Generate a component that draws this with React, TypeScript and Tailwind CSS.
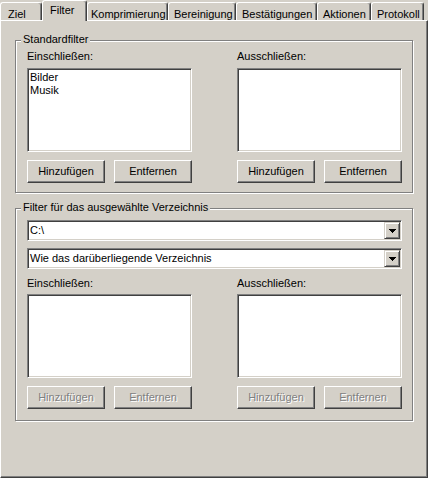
import type { ReactNode } from "react"
import clsx from "clsx"

// ─── Data ─────────────────────────────────────────────────────────────────────

const TABS = [
  { label: "Ziel", width: "w-[42px] pl-[7px]" },
  { label: "Filter", width: "w-[45px] pl-[7px]", active: true },
  { label: "Komprimierung", width: "w-[81px] pl-[3px]" },
  { label: "Bereinigung", width: "w-[68px] pl-[5px]" },
  { label: "Bestätigungen", width: "w-[81px] pl-[5px]" },
  { label: "Aktionen", width: "w-[54px] pl-[5px]" },
  { label: "Protokoll", width: "w-[53px] pl-[5px]" },
]

// classic 3D edges
const RAISED =
  "border border-t-white border-l-white border-r-[#404040] border-b-[#404040] shadow-[inset_-1px_-1px_0_#808080]"
const SUNKEN =
  "border border-t-[#808080] border-l-[#808080] border-r-white border-b-white shadow-[inset_1px_1px_0_#404040,inset_-1px_-1px_0_#d4d0c8]"

// ─── Pieces ───────────────────────────────────────────────────────────────────

function Tab({ label, width, active }: { label: string; width: string; active?: boolean }) {
  return (
    <div
      className={clsx(
        width,
        "shrink-0 rounded-t-[3px] border-t border-r border-l border-t-white border-r-[#404040] border-l-white bg-[#d4d0c8] text-left whitespace-nowrap shadow-[inset_-1px_0_0_#808080]",
        active ? "relative z-10 -mb-px h-[21px] pt-[3px]" : "h-[18px] pt-[5px]",
      )}
    >
      {label}
    </div>
  )
}

function GroupBox({ title, className, children }: { title: string; className?: string; children: ReactNode }) {
  return (
    <div
      className={clsx(
        "ml-[14px] w-[398px] border border-[#808080] pr-[10px] pl-[11px] shadow-[inset_1px_1px_0_#fff,1px_1px_0_#fff]",
        className,
      )}
    >
      <div className="-mt-[8px] -ml-[6px] w-fit bg-[#d4d0c8] px-[2px]">{title}</div>
      {children}
    </div>
  )
}

function Button({ children, disabled }: { children: ReactNode; disabled?: boolean }) {
  return (
    <button
      type="button"
      className={clsx(
        RAISED,
        "flex h-[23px] w-[78px] items-center justify-center bg-[#d4d0c8] leading-[13px]",
        disabled && "text-[#808080] [text-shadow:1px_1px_0_#fff]",
      )}
    >
      {children}
    </button>
  )
}

function ComboBox({ value }: { value: string }) {
  return (
    <div className={clsx(SUNKEN, "flex h-[21px] items-center bg-white p-px")}>
      <span className="flex-1 pl-px whitespace-nowrap">{value}</span>
      <div className="flex h-[17px] w-[16px] items-center justify-center border border-t-[#d4d0c8] border-r-[#404040] border-b-[#404040] border-l-[#d4d0c8] bg-[#d4d0c8] shadow-[inset_1px_1px_0_#fff,inset_-1px_-1px_0_#808080]">
        <svg width="7" height="4" viewBox="0 0 7 4" shapeRendering="crispEdges">
          <rect x="0" y="0" width="7" height="1" fill="#000" />
          <rect x="1" y="1" width="5" height="1" fill="#000" />
          <rect x="2" y="2" width="3" height="1" fill="#000" />
          <rect x="3" y="3" width="1" height="1" fill="#000" />
        </svg>
      </div>
    </div>
  )
}

function FilterColumn({
  label,
  items = [],
  disabled,
  listGap,
}: {
  label: string
  items?: string[]
  disabled?: boolean
  listGap: string
}) {
  return (
    <div className="flex flex-col">
      <div className="h-[13px]">{label}</div>
      <div className={clsx(SUNKEN, listGap, "h-[84px] bg-white pt-[2px] pl-[2px]")}>
        {items.map((item) => (
          <div key={item}>{item}</div>
        ))}
      </div>
      <div className="mt-[8px] flex gap-[9px]">
        <Button disabled={disabled}>Hinzufügen</Button>
        <Button disabled={disabled}>Entfernen</Button>
      </div>
    </div>
  )
}

// ─── Dialog page ──────────────────────────────────────────────────────────────

export default function App() {
  return (
    <div className="flex h-[478px] w-[428px] flex-col bg-[#d4d0c8] font-['Liberation_Sans',Arial,sans-serif] text-[11px] leading-[13px] text-black">
      <div className="flex h-[20px] items-end">
        {TABS.map((tab) => (
          <Tab key={tab.label} {...tab} />
        ))}
      </div>

      <div className="flex-1 border border-t-white border-r-[#404040] border-b-[#404040] border-l-white shadow-[inset_-1px_-1px_0_#808080]">
        <GroupBox title="Standardfilter" className="mt-[19px] pb-[9px]">
          <div className="mt-[4px] grid grid-cols-[165px_165px] gap-x-[45px]">
            <FilterColumn label="Einschließen:" items={["Bilder", "Musik"]} listGap="mt-[5px]" />
            <FilterColumn label="Ausschließen:" listGap="mt-[5px]" />
          </div>
        </GroupBox>

        <GroupBox title="Filter für das ausgewählte Verzeichnis" className="mt-[15px] pb-[11px]">
          <div className="mt-[6px] flex flex-col gap-[7px]">
            <ComboBox value="C:\" />
            <ComboBox value="Wie das darüberliegende Verzeichnis" />
          </div>
          <div className="mt-[8px] grid grid-cols-[165px_165px] gap-x-[45px]">
            <FilterColumn label="Einschließen:" listGap="mt-[4px]" disabled />
            <FilterColumn label="Ausschließen:" listGap="mt-[4px]" disabled />
          </div>
        </GroupBox>
      </div>
    </div>
  )
}
